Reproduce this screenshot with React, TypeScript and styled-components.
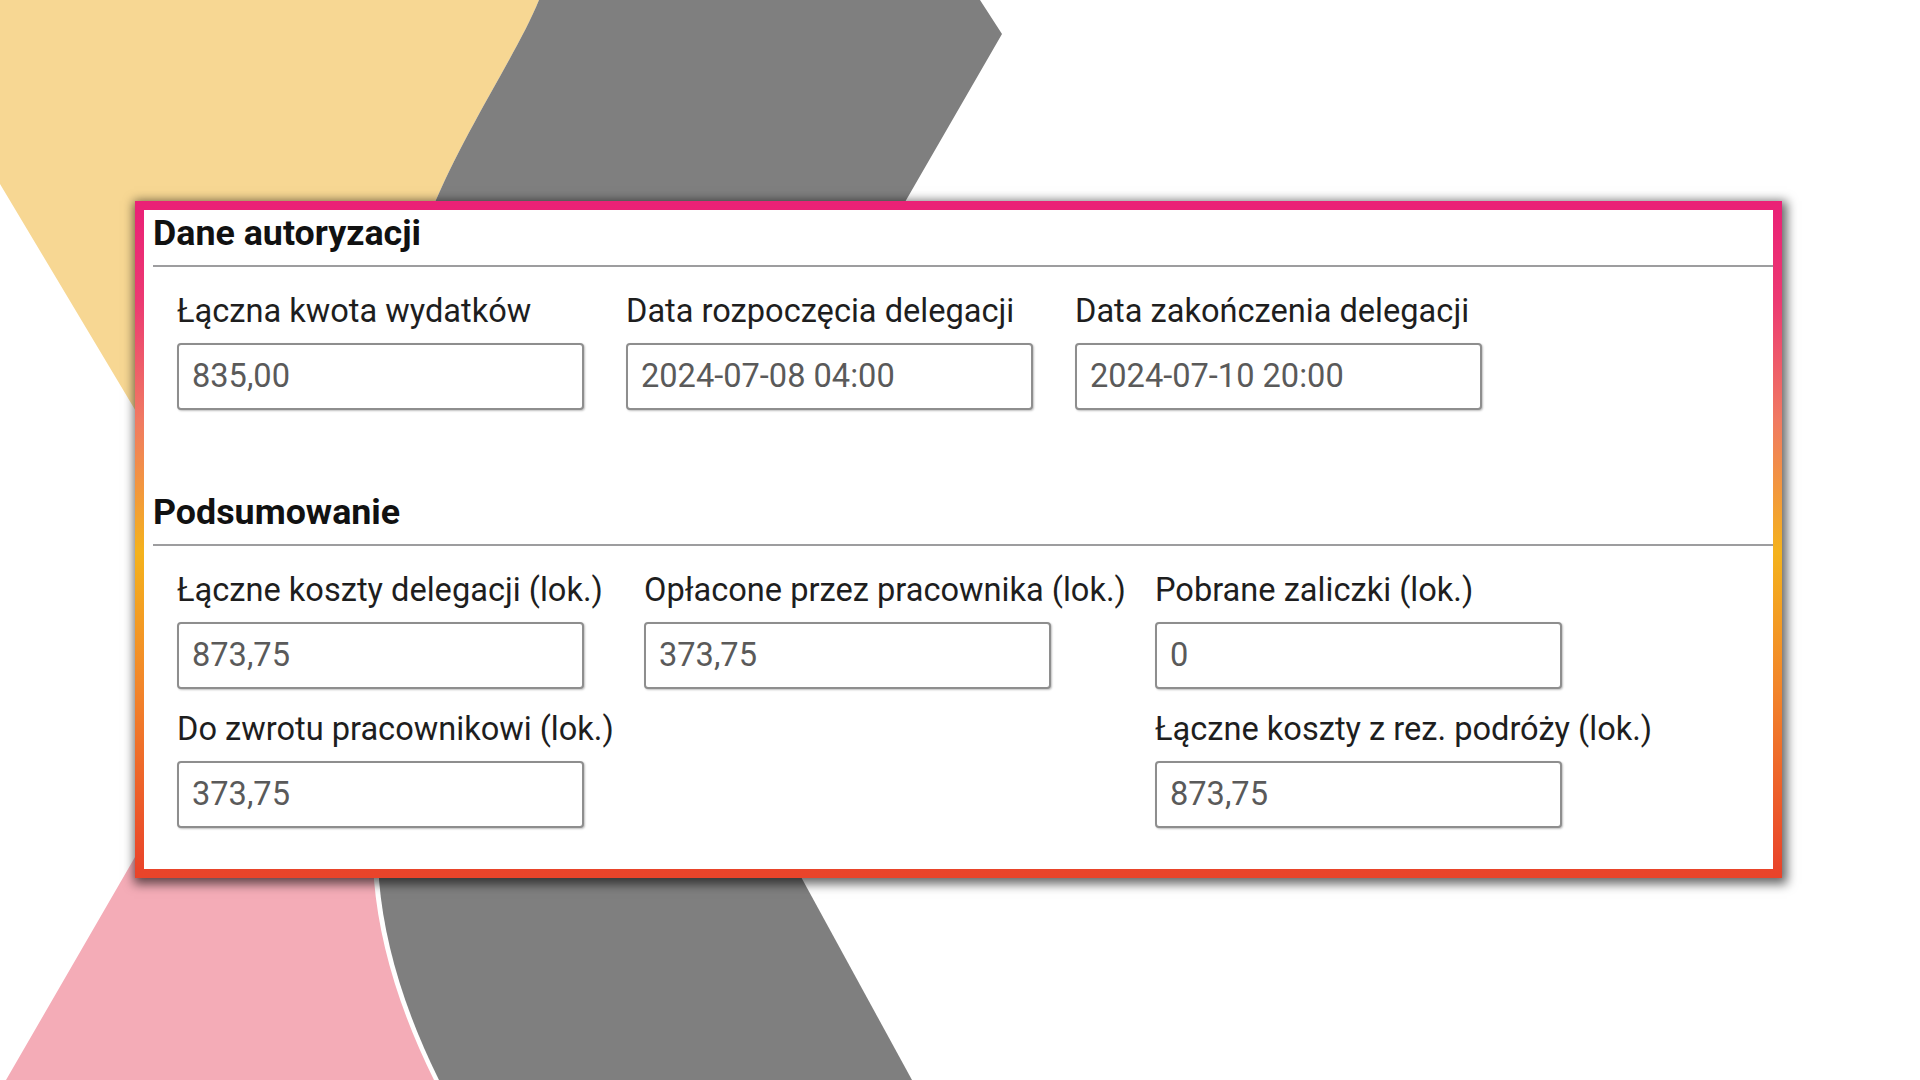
import styled, {createGlobalStyle} from "styled-components";

const GlobalStyle = createGlobalStyle`
    html, body {
        margin: 0;
        padding: 0;
        background: #ffffff;
    }

    body {
        font-family: Roboto, "Liberation Sans", Arial, sans-serif;
    }
`;

const Page = styled.main`
    position: relative;
    height: 100vh;
    display: flex;
    align-items: center;
    justify-content: center;
    overflow: hidden;
`;

// decorative shapes behind the card
const Backdrop = styled.svg`
    position: absolute;
    inset: 0;
    width: 100%;
    height: 100%;
    z-index: 0;
`;

const Card = styled.section`
    position: relative;
    z-index: 1;
    box-sizing: border-box;
    width: 1647px;
    margin: 0 3px 2px 0;
    background: #ffffff;
    border: 9px solid transparent;
    border-image: linear-gradient(
        to bottom,
        #ea2176 0%,
        #ec3a72 14%,
        #f07a62 32%,
        #f4b21c 52%,
        #f2862a 72%,
        #e9442a 100%
    ) 1;
    box-shadow: 2px 3px 10px 3px rgba(0, 0, 0, 0.6);
    padding: 2px 0 41px 9px;
`;

const Section = styled.div<{ $gap: number }>`
    margin-top: ${({$gap}) => $gap}px;
`;

const SectionTitle = styled.h2`
    margin: 0;
    padding: 0 0 11px;
    border-bottom: 2px solid #9d9d9f;
    font-size: 35.8px;
    line-height: 42px;
    font-weight: 700;
    color: #111111;
`;

const FieldGrid = styled.div<{ $columns: string, $gap: number }>`
    display: grid;
    grid-template-columns: ${({$columns}) => $columns};
    column-gap: ${({$gap}) => $gap}px;
    row-gap: 21px;
    padding: 25px 0 0 24px;
`;

const Field = styled.label<{ $col?: number }>`
    display: flex;
    flex-direction: column;
    grid-column: ${({$col}) => $col ?? "auto"};
`;

const FieldLabel = styled.span`
    font-size: 32.6px;
    line-height: 38px;
    color: #1e1e1e;
    white-space: nowrap;
    margin-bottom: 13px;
`;

const ValueInput = styled.input`
    box-sizing: border-box;
    width: 407px;
    height: 67px;
    border: 2px solid #8e8e8e;
    border-radius: 4px;
    padding: 0 0 0 13px;
    font-family: Roboto, "Liberation Sans", Arial, sans-serif;
    font-size: 32.6px;
    color: #5a5a5a;
    background: #ffffff;
    box-shadow: 1px 1px 2px rgba(0, 0, 0, 0.25);
    outline: none;
`;

type FieldData = { label: string, value: string, col?: number };

const authFields: FieldData[] = [
    {label: "Łączna kwota wydatków", value: "835,00"},
    {label: "Data rozpoczęcia delegacji", value: "2024-07-08 04:00"},
    {label: "Data zakończenia delegacji", value: "2024-07-10 20:00"},
];

const summaryFields: FieldData[] = [
    {label: "Łączne koszty delegacji (lok.)", value: "873,75"},
    {label: "Opłacone przez pracownika (lok.)", value: "373,75"},
    {label: "Pobrane zaliczki (lok.)", value: "0"},
    {label: "Do zwrotu pracownikowi (lok.)", value: "373,75", col: 1},
    {label: "Łączne koszty z rez. podróży (lok.)", value: "873,75", col: 3},
];

const renderFields = (fields: FieldData[]) =>
    fields.map(({label, value, col}) => (
        <Field key={label} $col={col}>
            <FieldLabel>{label}</FieldLabel>
            <ValueInput readOnly value={value}/>
        </Field>
    ));

const App = () => {
    return (
        <>
            <GlobalStyle/>
            <Page>
                <Backdrop viewBox="0 0 1920 1080" preserveAspectRatio="none">
                    <path fill="#f7d793" d="M0,0 L539,0 C518,52 462,135 432,210 L420,600 L250,602 L0,184 Z"/>
                    <path fill="#7f7f7f" d="M539,0 L980,0 L1002,34 L860,280 L425,280 L432,210 C462,135 518,52 539,0 Z"/>
                    <path fill="#f4acb7" d="M6,1080 L168,800 L372,800 L374,880 Q382,975 434,1080 Z"/>
                    <path fill="#7f7f7f" d="M379,800 L759,800 L912,1080 L439,1080 Q387,975 379,880 Z"/>
                </Backdrop>
                <Card>
                    <Section $gap={0}>
                        <SectionTitle>Dane autoryzacji</SectionTitle>
                        <FieldGrid $columns="407px 407px 407px" $gap={42}>
                            {renderFields(authFields)}
                        </FieldGrid>
                    </Section>
                    <Section $gap={81}>
                        <SectionTitle>Podsumowanie</SectionTitle>
                        <FieldGrid $columns="437px 481px 407px" $gap={30}>
                            {renderFields(summaryFields)}
                        </FieldGrid>
                    </Section>
                </Card>
            </Page>
        </>
    );
};

export default App;
